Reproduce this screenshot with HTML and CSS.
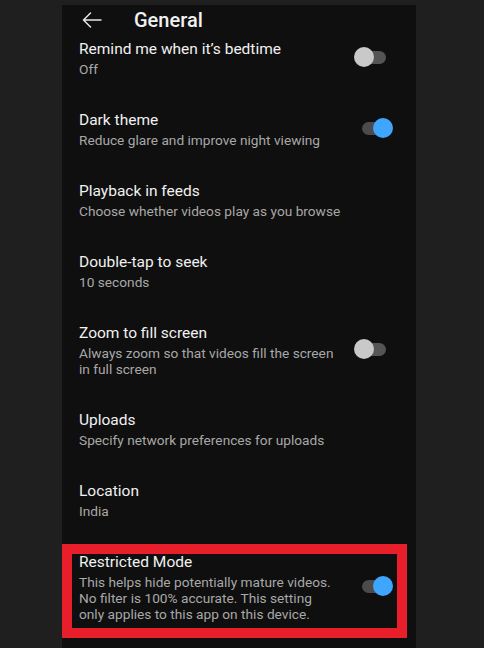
FILE: index.html
```html
<!DOCTYPE html>
<html lang="en">
<head>
<meta charset="utf-8">
<title>General</title>
<link rel="stylesheet" href="styles.css">
</head>
<body>
<div class="phone">
  <header class="appbar">
    <svg class="back" width="20" height="16" viewBox="0 0 20 16" aria-hidden="true">
      <path d="M1.5 8 H19 M8.5 1 L1.5 8 L8.5 15" fill="none" stroke="#e6e6e6" stroke-width="1.5" stroke-linecap="round" stroke-linejoin="round"/>
    </svg>
    <h1 class="appbar-title">General</h1>
  </header>
  <div class="list">
    <div class="row row-first">
      <div class="text">
        <div class="title">Remind me when it’s bedtime</div>
        <div class="sub">Off</div>
      </div>
      <span class="switch"><span class="track"></span><span class="thumb"></span></span>
    </div>
    <div class="row">
      <div class="text">
        <div class="title">Dark theme</div>
        <div class="sub">Reduce glare and improve night viewing</div>
      </div>
      <span class="switch on"><span class="track"></span><span class="thumb"></span></span>
    </div>
    <div class="row">
      <div class="text">
        <div class="title">Playback in feeds</div>
        <div class="sub">Choose whether videos play as you browse</div>
      </div>
    </div>
    <div class="row">
      <div class="text">
        <div class="title">Double-tap to seek</div>
        <div class="sub">10 seconds</div>
      </div>
    </div>
    <div class="row">
      <div class="text">
        <div class="title">Zoom to fill screen</div>
        <div class="sub">Always zoom so that videos fill the screen in full screen</div>
      </div>
      <span class="switch"><span class="track"></span><span class="thumb"></span></span>
    </div>
    <div class="row">
      <div class="text">
        <div class="title">Uploads</div>
        <div class="sub">Specify network preferences for uploads</div>
      </div>
    </div>
    <div class="row">
      <div class="text">
        <div class="title">Location</div>
        <div class="sub">India</div>
      </div>
    </div>
    <div class="row">
      <div class="text">
        <div class="title">Restricted Mode</div>
        <div class="sub">This helps hide potentially mature videos. No filter is 100% accurate. This setting only applies to this app on this device.</div>
      </div>
      <span class="switch on"><span class="track"></span><span class="thumb"></span></span>
    </div>
  </div>
</div>
<div class="highlight"></div>
</body>
</html>
```

FILE: styles.css
```css
* { box-sizing: border-box; }
html, body {
  margin: 0;
  padding: 0;
  background: #1f1f1f;
  font-family: Roboto, "Liberation Sans", sans-serif;
  overflow: hidden;
}
body {
  width: 484px;
  height: 648px;
  position: relative;
}
.phone {
  margin: 5px 0 0 62px;
  width: 354px;
  height: 643px;
  background: #0f0f0f;
  display: flex;
  flex-direction: column;
  overflow: hidden;
}
.appbar {
  height: 36px;
  padding: 0 0 7px 20px;
  display: flex;
  align-items: center;
  flex-shrink: 0;
  background: #0f0f0f;
  position: relative;
  z-index: 1;
}
.back { display: block; margin-right: 32px; }
.appbar-title {
  margin: 0;
  font-size: 20px;
  font-weight: 500;
  color: #f1f1f1;
  line-height: 24px;
}
.list {
  flex: 1;
  overflow: hidden;
}
.row {
  display: flex;
  align-items: center;
  padding: 16px 22px 16px 17px;
}
.row-first { margin-top: -19.5px; }
.text { flex: 1; min-width: 0; }
.title {
  font-size: 15.5px;
  line-height: 22px;
  color: #f1f1f1;
}
.sub {
  margin-top: 1px;
  font-size: 13.7px;
  line-height: 16px;
  color: #a8a8a8;
}
.switch {
  position: relative;
  width: 40px;
  height: 20px;
  flex-shrink: 0;
  margin-left: 17px;
}
.track {
  position: absolute;
  left: 8px;
  top: 3.5px;
  width: 24px;
  height: 13px;
  border-radius: 7px;
  background: #555;
}
.thumb {
  position: absolute;
  left: 0;
  top: 0;
  width: 20px;
  height: 20px;
  border-radius: 50%;
  background: #c9c9c9;
}
.switch.on .track { background: #4b4b4b; }
.switch.on .thumb { left: 19px; background: #3ea6ff; }
.highlight {
  position: absolute;
  left: 62px;
  top: 544px;
  width: 345px;
  height: 94px;
  border: 10px solid #e81f2a;
  pointer-events: none;
}
```
